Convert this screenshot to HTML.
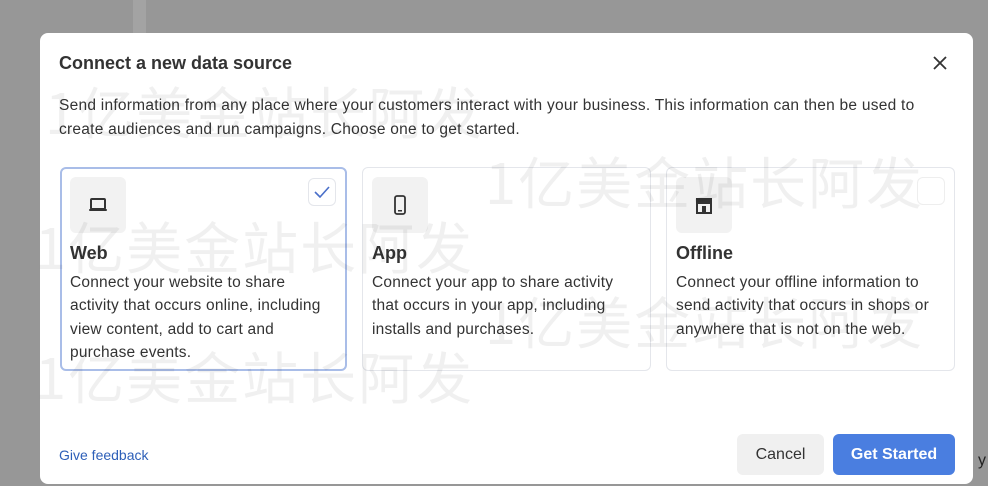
<!DOCTYPE html>
<html><head><meta charset="utf-8"><style>
body{margin:0;width:988px;height:486px;background:#979797;position:relative;overflow:hidden;font-family:"Liberation Sans",Arial,sans-serif;color:#1c1e21}
.bar{position:absolute;left:133px;top:0;width:13px;height:40px;background:#a3a3a3}
.modal{position:absolute;left:40px;top:33px;width:933px;height:451px;background:#fff;border-radius:8px}
h1{position:absolute;left:19px;top:20px;margin:0;font-size:18px;font-weight:bold;color:#333}
.x{position:absolute;left:892px;top:22px}
.desc{position:absolute;left:19px;top:61px;width:900px;font-size:15.5px;line-height:24px;color:#333;letter-spacing:0.25px}
.card{position:absolute;top:134px;height:204px;border:1px solid #e4e6eb;border-radius:6px;box-sizing:border-box}
.card.sel{border:2px solid #a9bde8}
.ib{position:absolute;left:9px;top:9px;width:56px;height:56px;background:#f2f2f2;border-radius:6px;display:flex;align-items:center;justify-content:center}
.card.sel .ib{left:8px;top:8px}
.card h2{position:absolute;left:9px;top:75px;margin:0;font-size:18px;font-weight:bold;color:#333}
.card.sel h2{left:8px;top:74px}
.card p{position:absolute;left:9px;top:103px;margin:0;font-size:15.5px;line-height:23.3px;color:#333;width:262px;letter-spacing:0.2px}
.card.sel p{left:8px;top:102px}
.chk{position:absolute;right:9px;top:9px;width:26px;height:26px;border:1px solid #e4e6eb;border-radius:6px;display:flex;align-items:center;justify-content:center}
.fb{position:absolute;left:19px;top:414px;font-size:14px;color:#2d5fb8}
.btn{position:absolute;top:401px;height:41px;border-radius:6px;font-size:16px;display:flex;align-items:center;justify-content:center}
.wm{position:absolute;font-family:"Noto Sans CJK SC",sans-serif;font-size:56px;letter-spacing:2px;color:rgba(0,0,0,0.06);white-space:nowrap;pointer-events:none}
</style></head><body>
<div class="bar"></div>
<div style="position:absolute;left:978px;top:452px;font-size:16px;color:#222">y</div>
<div class="modal">
<h1>Connect a new data source</h1>
<svg class="x" width="16" height="16" viewBox="0 0 16 16"><path d="M2 2L14 14M14 2L2 14" stroke="#333" stroke-width="1.8"/></svg>
<div class="desc">Send information from any place where your customers interact with your business. This information can then be used to create audiences and run campaigns. Choose one to get started.</div>
<div class="card sel" style="left:20px;width:287px">
<div class="ib"><svg width="20" height="16" viewBox="0 0 20 16"><rect x="3" y="2" width="14" height="10" rx="1" fill="none" stroke="#333" stroke-width="2"/><rect x="1" y="12" width="18" height="2" rx="1" fill="#333"/></svg></div>
<div class="chk"><svg width="16" height="12" viewBox="0 0 16 12"><path d="M1 6L6 11L15 1" fill="none" stroke="#4a6fc9" stroke-width="1.6"/></svg></div>
<h2>Web</h2><p>Connect your website to share activity that occurs online, including view content, add to cart and purchase events.</p></div>
<div class="card" style="left:322px;width:289px">
<div class="ib"><svg width="14" height="20" viewBox="0 0 14 20"><rect x="2" y="1" width="10" height="18" rx="2" fill="none" stroke="#333" stroke-width="1.8"/><rect x="5" y="15" width="4" height="1.5" fill="#333"/></svg></div>
<h2>App</h2><p>Connect your app to share activity that occurs in your app, including installs and purchases.</p></div>
<div class="card" style="left:626px;width:289px">
<div class="ib"><svg width="20" height="18" viewBox="0 0 20 18"><path d="M2 2h16v5H2z" fill="#333"/><rect x="3" y="7" width="14" height="10" fill="none" stroke="#333" stroke-width="2"/><rect x="8" y="10" width="4" height="7" fill="#333"/></svg></div>
<div class="chk" style="border-color:#eee"></div>
<h2>Offline</h2><p>Connect your offline information to send activity that occurs in shops or anywhere that is not on the web.</p></div>
<div class="fb">Give feedback</div>
<div class="btn" style="left:697px;width:87px;background:#f0f0f0;color:#333">Cancel</div>
<div class="btn" style="left:793px;width:122px;background:#4a7ee0;color:#fff;font-weight:bold">Get Started</div>
</div>
<div class="wm" style="left:45px;top:70px">1亿美金站长阿发</div>
<div class="wm" style="left:485px;top:140px">1亿美金站长阿发</div>
<div class="wm" style="left:35px;top:205px">1亿美金站长阿发</div>
<div class="wm" style="left:485px;top:280px">1亿美金站长阿发</div>
<div class="wm" style="left:35px;top:335px">1亿美金站长阿发</div>
</body></html>
